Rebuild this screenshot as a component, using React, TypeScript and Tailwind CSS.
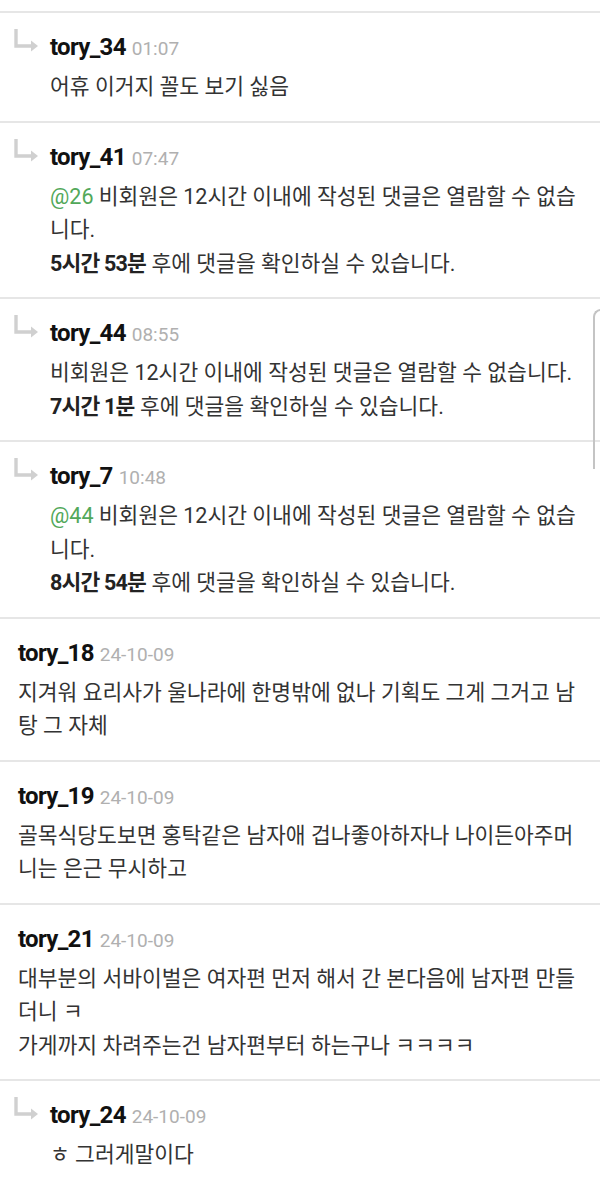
import React from "react";

type Comment = {
  name: string;
  time: string;
  reply?: boolean;
  mention?: string;
  body: React.ReactNode;
};

const locked = (left: string) => (
  <>
    비회원은 12시간 이내에 작성된 댓글은 열람할 수 없습니다.
    <br />
    <b className="font-bold text-[#222] tracking-[-0.8px]">{left}</b> 후에 댓글을 확인하실 수 있습니다.
  </>
);

const comments: Comment[] = [
  { name: "tory_34", time: "01:07", reply: true, body: "어휴 이거지 꼴도 보기 싫음" },
  { name: "tory_41", time: "07:47", reply: true, mention: "@26", body: locked("5시간 53분") },
  { name: "tory_44", time: "08:55", reply: true, body: locked("7시간 1분") },
  { name: "tory_7", time: "10:48", reply: true, mention: "@44", body: locked("8시간 54분") },
  {
    name: "tory_18",
    time: "24-10-09",
    body: "지겨워 요리사가 울나라에 한명밖에 없나 기획도 그게 그거고 남탕 그 자체",
  },
  {
    name: "tory_19",
    time: "24-10-09",
    body: "골목식당도보면 홍탁같은 남자애 겁나좋아하자나 나이든아주머니는 은근 무시하고",
  },
  {
    name: "tory_21",
    time: "24-10-09",
    body: (
      <>
        대부분의 서바이벌은 여자편 먼저 해서 간 본다음에 남자편 만들더니 ㅋ
        <br />
        가게까지 차려주는건 남자편부터 하는구나 ㅋㅋㅋㅋ
      </>
    ),
  },
  { name: "tory_24", time: "24-10-09", reply: true, body: "ㅎ 그러게말이다" },
];

function ReplyArrow() {
  return (
    <svg
      width="27"
      height="24"
      viewBox="0 0 27 24"
      className="absolute left-[13px] top-[16px]"
    >
      <path d="M3 0 V17 H20" fill="none" stroke="#d0d0d0" strokeWidth="3.4" />
      <path d="M18 11.5 L25 17 L18 22.5 Z" fill="#d0d0d0" />
    </svg>
  );
}

function CommentRow({ c }: { c: Comment }) {
  return (
    <div
      className={`relative border-t-2 border-[#e6e6e6] pt-[20px] pb-[17px] pr-[20px] ${
        c.reply ? "pl-[50px]" : "pl-[18px]"
      }`}
    >
      {c.reply && <ReplyArrow />}
      <div className="flex items-baseline h-[28px] leading-[28px]">
        <span className="text-[24px] font-bold text-[#111] tracking-[-0.7px]">{c.name}</span>
        <span className="ml-[6px] text-[19px] text-[#b0b0b0]">{c.time}</span>
      </div>
      <div className="mt-[9px] text-[21.5px] leading-[33.5px] text-[#333] break-all">
        {c.mention && <span className="text-[#52a85a]">{c.mention} </span>}
        {c.body}
      </div>
    </div>
  );
}

export default function App() {
  return (
    <div
      className="relative w-[600px] h-[1187px] overflow-hidden bg-white pt-[11px]"
      style={{ fontFamily: 'Roboto, "Noto Sans CJK KR", sans-serif' }}
    >
      {comments.map((c) => (
        <CommentRow key={c.name} c={c} />
      ))}
      <div className="absolute left-[593px] top-[309px] w-[20px] h-[160px] rounded-tl-[8px] border-l-[2px] border-t-[2px] border-[#c4c4c4]" />
    </div>
  );
}
